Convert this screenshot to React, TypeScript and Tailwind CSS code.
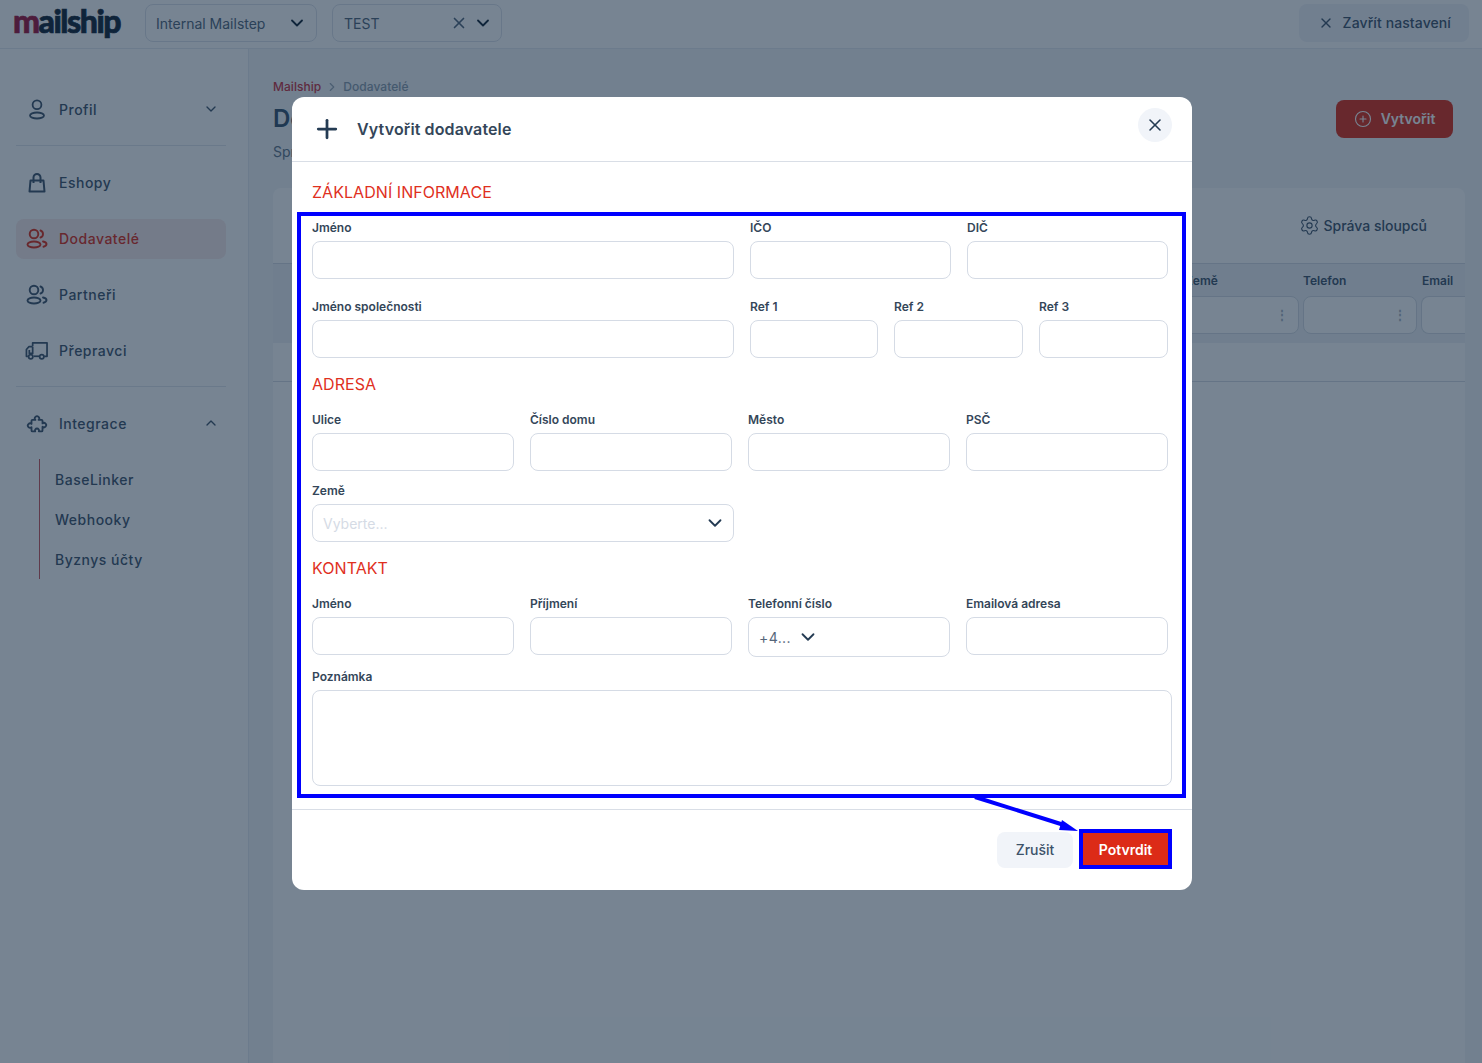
import { ChevronDown, ChevronUp, ChevronRight, CirclePlus, Plus, Settings, X } from 'lucide-react'

function UserIcon({ className = '' }: { className?: string }) {
  return (
    <svg className={className} width="22" height="22" viewBox="0 0 22 22" fill="none" stroke="currentColor" strokeWidth="1.8">
      <circle cx="11" cy="5.8" r="4.4" />
      <ellipse cx="11" cy="16.5" rx="7" ry="3" />
    </svg>
  )
}

function BagIcon() {
  return (
    <svg width="22" height="22" viewBox="0 0 22 22" fill="none" stroke="currentColor" strokeWidth="2" strokeLinejoin="round">
      <path d="M4.5 8.5h13l1 11h-15z" />
      <path d="M7.5 11V5.5a3.5 3.5 0 0 1 7 0V11" />
    </svg>
  )
}

function UsersIcon() {
  return (
    <svg width="22" height="22" viewBox="0 0 22 22" fill="none" stroke="currentColor" strokeWidth="1.9" strokeLinecap="round">
      <circle cx="8" cy="6" r="4.3" />
      <ellipse cx="8" cy="16.5" rx="6.5" ry="3" />
      <path d="M14.5 2.500a3.7 3.7 0 0 1 0 7" />
      <path d="M17 13.500c2 .4 3.5 1.2 3.5 2.600s-1.200 2.300-3 2.700" />
    </svg>
  )
}

function TruckIcon() {
  return (
    <svg width="24" height="22" viewBox="0 0 24 22" fill="none" stroke="currentColor" strokeWidth="1.8" strokeLinejoin="round">
      <path d="M8 6V2.500h15v14h-3" />
      <path d="M15 16.500h-6" />
      <path d="M8 6.500H4L1.500 9.500v7H3" />
      <path d="M4.500 10v3.500H8V6.500" />
      <circle cx="6" cy="17" r="2.200" />
      <circle cx="17.500" cy="17" r="2.200" />
    </svg>
  )
}

function PuzzleIcon() {
  return (
    <svg width="22" height="22" viewBox="0 0 24 24" fill="none" stroke="currentColor" strokeWidth="2" strokeLinejoin="round">
      <path d="M7 7.500h3.200a2.400 2.400 0 1 1 3.600 0H17a1 1 0 0 1 1 1v2.900a2.400 2.400 0 1 1 0 3.600V19a1 1 0 0 1-1 1h-3a2.200 2.200 0 1 0-4 0H7a1 1 0 0 1-1-1v-3.500a2.400 2.400 0 1 1 0-3.600V8.500a1 1 0 0 1 1-1z" />
    </svg>
  )
}

function NavItem({ icon, label, active, chevron }: { icon: React.ReactNode; label: string; active?: boolean; chevron?: 'up' | 'down' }) {
  return (
    <div className={`flex h-10 items-center rounded-lg pr-[7px] pl-[9px] ${active ? 'bg-[#f9e9e9] text-[#dc2b17]' : 'text-[#3d5269]'}`}>
      <span className="flex w-[23px] justify-center">{icon}</span>
      <span className="ml-[11px] flex-1 text-sm font-medium tracking-[0.5px]">{label}</span>
      {chevron === 'down' && <ChevronDown size={16} className="mb-[2px]" />}
      {chevron === 'up' && <ChevronUp size={16} className="mb-[2px]" />}
    </div>
  )
}

function Field({ label, className = '' }: { label: string; className?: string }) {
  return (
    <div className={className}>
      <label className="block h-[21px] pt-px text-xs leading-[14px] font-semibold text-[#344659]">{label}</label>
      <input className="block h-[38px] w-full rounded-lg border border-[#d5dbe5] bg-white" />
    </div>
  )
}

function SectionTitle({ children }: { children: React.ReactNode }) {
  return <h3 className="text-base leading-6 font-normal tracking-[0.05px] text-[#e0301e]">{children}</h3>
}

function Background() {
  return (
    <div className="flex h-[1063px] flex-col overflow-hidden bg-white">
      <header className="flex h-[49px] shrink-0 items-center border-b border-[#e6eaf0] pr-[13px] pb-[2px]">
        <div className="ml-[13px] w-[132px] -translate-y-[2px] font-['Lato',sans-serif] text-[32px] leading-none font-black tracking-[-1.45px] text-[#0f2233] [-webkit-text-stroke:0.7px_currentColor]">
          <span className="text-[#9e1038]">m</span>ailship
        </div>
        <div className="flex h-[38px] w-[172px] items-center justify-between rounded-lg border border-[#dde2ea] pr-[9px] pl-[10px] text-sm text-[#4f6479]">
          <span className="pt-[2px]">Internal Mailstep</span>
          <ChevronDown size={20} strokeWidth={2.2} className="mb-px text-[#0f2233]" />
        </div>
        <div className="ml-[15px] flex h-[38px] w-[170px] items-center rounded-lg border border-[#dde2ea] pr-[8px] pl-[11px] text-sm text-[#4f6479]">
          <span className="flex-1 pt-[2px]">TEST</span>
          <X size={18} strokeWidth={2.2} className="mr-[5px]" />
          <ChevronDown size={20} strokeWidth={2.2} className="mb-px text-[#0f2233]" />
        </div>
        <div className="ml-auto flex h-[38px] w-[170px] items-center justify-end gap-[9px] rounded-lg bg-[#f1f4f9] pr-[18px] text-sm font-medium tracking-[0.1px] text-[#3d5269]">
          <X size={16} />
          Zavřít nastavení
        </div>
      </header>

      <div className="flex flex-1">
        <aside className="w-[249px] shrink-0 border-r border-[#e6eaf0] pt-[41px] pr-[22px] pl-4">
          <NavItem icon={<UserIcon />} label="Profil" chevron="down" />
          <div className="mt-[15px] mb-[17px] h-px bg-[#e0e5ec]" />
          <div className="flex flex-col gap-4">
            <NavItem icon={<BagIcon />} label="Eshopy" />
            <NavItem icon={<UsersIcon />} label="Dodavatelé" active />
            <NavItem icon={<UsersIcon />} label="Partneři" />
            <NavItem icon={<TruckIcon />} label="Přepravci" />
          </div>
          <div className="mt-[15px] mb-[17px] h-px bg-[#e0e5ec]" />
          <NavItem icon={<PuzzleIcon />} label="Integrace" chevron="up" />
          <div className="mt-[15px] ml-[23px] flex h-[120px] flex-col border-l border-[#c9545a] pt-px pl-[15px] text-sm font-medium tracking-[0.5px] text-[#3d5269]">
            <div className="flex h-10 shrink-0 items-center">BaseLinker</div>
            <div className="flex h-10 shrink-0 items-center">Webhooky</div>
            <div className="flex h-10 shrink-0 items-center">Byznys účty</div>
          </div>
        </aside>

        <main className="flex-1 bg-[#f3f5f8] pt-[30px] pr-[17px] pl-6">
          <div className="flex items-center text-xs font-medium tracking-[0.05px]">
            <span className="text-[#c9303e]">Mailship</span>
            <ChevronRight size={14} className="mx-[4px] text-[#9aa7b5]" />
            <span className="text-[#8a9bac]">Dodavatelé</span>
          </div>
          <div className="flex items-start justify-between">
            <div>
              <h1 className="mt-2 text-2xl leading-8 font-semibold text-[#344f6b]">Dodavatelé</h1>
              <p className="mt-[7px] text-sm text-[#5f7387]">Správa dodavatelů</p>
            </div>
            <div className="mt-[5px] mr-3 flex h-[38px] w-[117px] items-center justify-center gap-[9px] rounded-lg bg-[#dc2b17] text-sm font-semibold text-white">
              <CirclePlus size={18} strokeWidth={1.5} />
              Vytvořit
            </div>
          </div>

          <section className="mt-[26px] h-[900px] rounded-t-lg bg-white">
            <div className="flex h-[76px] items-center justify-end border-b border-[#d5dbe3] pr-[38px] text-sm font-medium text-[#3d5269]">
              <Settings size={21} strokeWidth={1.25} className="mr-[3px]" />
              Správa sloupců
            </div>
            <div className="flex h-[79px] justify-end gap-1 overflow-hidden bg-[#eef1f5] pt-[9px] text-xs font-semibold text-[#3d5269]">
              <div className="w-[250px]">
                <div className="h-[23px] pl-[136px]">Země</div>
                <div className="flex h-[38px] items-center justify-end rounded-lg border border-[#d5dbe3] bg-white pr-[10px] text-[#a8b4c1]">⋮</div>
              </div>
              <div className="w-[114px]">
                <div className="h-[23px]">Telefon</div>
                <div className="flex h-[38px] items-center justify-end rounded-lg border border-[#d5dbe3] bg-white pr-[10px] text-[#a8b4c1]">⋮</div>
              </div>
              <div className="w-[44px] shrink-0">
                <div className="h-[23px] pl-px whitespace-nowrap">Email</div>
                <div className="h-[38px] rounded-l-lg border border-r-0 border-[#d5dbe3] bg-white" />
              </div>
            </div>
            <div className="h-[39px] border-b border-[#d5dbe3]" />
          </section>
        </main>
      </div>
    </div>
  )
}

export default function App() {
  return (
    <div className="relative h-[1063px] overflow-hidden font-['Inter',sans-serif]">
      <Background />

      <div className="absolute inset-0 flex justify-center bg-[#0f2740]/57 pt-[97px] pl-[2px]">
        <div className="relative h-[793px] w-[900px] rounded-xl bg-white">
          <div className="flex h-[65px] items-center border-b border-[#d9dee6] pr-[20px] pl-[20px]">
            <Plus size={30} strokeWidth={2.2} className="text-[#243b53]" />
            <h2 className="ml-[15px] flex-1 text-base font-semibold tracking-[0.12px] text-[#344659]">Vytvořit dodavatele</h2>
            <button className="mb-2 flex h-[34px] w-[34px] items-center justify-center rounded-full bg-[#f1f4f9] text-[#243b53]">
              <X size={20} strokeWidth={1.9} />
            </button>
          </div>

          <div className="px-5 pt-[18px]">
            <SectionTitle>ZÁKLADNÍ INFORMACE</SectionTitle>
            <div className="mt-4 mr-1 grid grid-cols-[422px_1fr_1fr] gap-x-4">
              <Field label="Jméno" />
              <Field label="IČO" />
              <Field label="DIČ" />
            </div>
            <div className="mt-5 mr-1 grid grid-cols-[422px_128px_129px_129px] gap-x-4">
              <Field label="Jméno společnosti" />
              <Field label="Ref 1" />
              <Field label="Ref 2" />
              <Field label="Ref 3" />
            </div>

            <div className="mt-[14px]">
              <SectionTitle>ADRESA</SectionTitle>
            </div>
            <div className="mt-4 mr-1 grid grid-cols-4 gap-x-4">
              <Field label="Ulice" />
              <Field label="Číslo domu" />
              <Field label="Město" />
              <Field label="PSČ" />
            </div>
            <div className="mt-3 w-[422px]">
              <label className="block h-[21px] pt-px text-xs leading-[14px] font-semibold text-[#344659]">Země</label>
              <div className="flex h-[38px] items-center justify-between rounded-lg border border-[#d5dbe5] pr-[7px] pl-[10px] text-sm text-[#d5dbe5]">
                <span className="pt-px">Vyberte...</span>
                <ChevronDown size={22} strokeWidth={2} className="text-[#243b53]" />
              </div>
            </div>

            <div className="mt-[14px]">
              <SectionTitle>KONTAKT</SectionTitle>
            </div>
            <div className="mt-4 mr-1 grid grid-cols-4 items-start gap-x-4">
              <Field label="Jméno" />
              <Field label="Příjmení" />
              <div>
                <label className="block h-[21px] pt-px text-xs leading-[14px] font-semibold text-[#344659]">Telefonní číslo</label>
                <div className="flex h-10 items-center rounded-lg border border-[#d5dbe5] pl-[10px] text-sm tracking-[0.4px] text-[#56667a]">
                  <span className="pt-px">+4...</span>
                  <ChevronDown size={22} strokeWidth={2} className="ml-[6px] text-[#243b53]" />
                </div>
              </div>
              <Field label="Emailová adresa" />
            </div>
            <div className="mt-3">
              <label className="block h-[21px] pt-px text-xs leading-[14px] font-semibold text-[#344659]">Poznámka</label>
              <textarea className="block h-[96px] w-full resize-none rounded-lg border border-[#d5dbe5]" />
            </div>
          </div>

          <div className="mt-[23px] flex justify-end gap-[7px] border-t border-[#d9dee6] pt-[22px] pr-[21px]">
            <button className="h-9 w-[76px] rounded-lg bg-[#f1f4f9] text-sm font-medium text-[#3d5269]">Zrušit</button>
            <button className="h-9 w-[91px] bg-[#dc2b17] text-sm font-semibold text-white">Potvrdit</button>
          </div>

          {/* annotation overlay */}
          <div className="pointer-events-none absolute top-[115px] left-[5px] h-[586px] w-[889px] border-4 border-[#0000ff]" />
          <div className="pointer-events-none absolute top-[732px] left-[787px] h-[40px] w-[93px] border-4 border-[#0000ff]" />
          <svg className="pointer-events-none absolute top-[695px] left-[680px]" width="110" height="42" viewBox="0 0 110 42">
            <path d="M3 5 L92 33" stroke="#0000ff" strokeWidth="4" />
            <path d="M106 39 L90 28 L87 38 Z" fill="#0000ff" />
          </svg>
        </div>
      </div>
    </div>
  )
}
